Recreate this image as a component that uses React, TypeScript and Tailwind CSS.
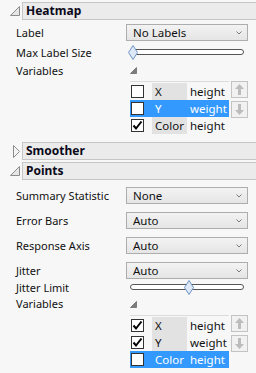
import React from "react";

const OpenTri = ({ size = 9, fill = "#e6e6e6", stroke = "#8c8c8c" }: { size?: number; fill?: string; stroke?: string }) => (
  <svg width={size + 1} height={size + 1} viewBox={`0 0 ${size + 1} ${size + 1}`}>
    <path d={`M${size + 0.5} 0.5 L${size + 0.5} ${size + 0.5} L0.5 ${size + 0.5} Z`} fill={fill} stroke={stroke} strokeWidth="1" />
  </svg>
);

const ClosedTri = () => (
  <svg width="7" height="13" viewBox="0 0 7 13">
    <path d="M0.5 0.5 L6.5 6.5 L0.5 12.5 Z" fill="#f4f4f4" stroke="#8c8c8c" strokeWidth="1" />
  </svg>
);

function Header({ title, open }: { title: string; open: boolean }) {
  return (
    <div className="flex items-center h-[18px]">
      <div className="w-[22px] h-full flex items-center justify-end pr-[2px]">
        {open ? <OpenTri /> : <ClosedTri />}
      </div>
      <div className="flex-1 h-full bg-[#ebebeb] border border-r-0 border-[#c6c6c6] flex items-center pl-[3px] font-bold text-[12px] text-[#0a0a1a]">
        {title}
      </div>
    </div>
  );
}

function Dropdown({ value }: { value: string }) {
  return (
    <div className="w-[122px] h-[17px] border border-[#adadad] bg-linear-to-b from-[#f3f3f3] to-[#e5e5e5] flex items-center justify-between pl-[6px] pr-[5px] text-[11.5px] text-[#111]">
      <span>{value}</span>
      <svg width="6" height="4" viewBox="0 0 6 4">
        <path d="M0.5 0.5 L3 3 L5.5 0.5" fill="none" stroke="#7a7a7a" strokeWidth="1" />
      </svg>
    </div>
  );
}

function Slider({ pos }: { pos: number }) {
  return (
    <div className="relative w-[120px] h-[16px] flex items-center">
      <div className="ml-[4px] w-[114px] h-[6px] rounded-full border border-[#555] bg-white" />
      <svg className="absolute top-[1px]" style={{ left: pos }} width="10" height="15" viewBox="0 0 10 15">
        <path d="M5 0.5 L9.5 7.5 L5 14.5 L0.5 7.5 Z" fill="#dde9f6" stroke="#6f93c2" strokeWidth="1" />
      </svg>
    </div>
  );
}

function Check({ checked }: { checked: boolean }) {
  return (
    <div className="w-[13px] h-[13px] border border-[#333] bg-white flex items-center justify-center">
      {checked && (
        <svg width="11" height="11" viewBox="0 0 11 11">
          <path d="M1.5 5.5 L4 8.5 L9.5 1.5" fill="none" stroke="#000" strokeWidth="2" />
        </svg>
      )}
    </div>
  );
}

function ArrowBtn({ dir }: { dir: "up" | "down" }) {
  return (
    <div className="w-[17px] h-[17px] border border-[#c3c3c3] bg-[#f1f1f1] flex items-center justify-center">
      <svg width="9" height="11" viewBox="0 0 9 11" style={{ transform: dir === "down" ? "rotate(180deg)" : undefined }}>
        <path d="M4.5 0 L9 5 L6 5 L6 11 L3 11 L3 5 L0 5 Z" fill="#bcbcbc" />
      </svg>
    </div>
  );
}

type Row = { role: string; v: string; checked: boolean; sel: boolean };

function VarTable({ rows }: { rows: Row[] }) {
  return (
    <div className="flex ml-[4px] text-[11.5px]">
      <div className="w-[99px] border-t border-[#dcdcdc] pt-[1px] relative">
        <div className="absolute left-[22px] top-[1px] bottom-0 w-[35px] bg-[#e2e2e2]" />
        {rows.map((r) => (
          <div
            key={r.role}
            className={`relative flex items-center h-[17px] ${r.sel ? "bg-[#3399ff] text-white" : "text-[#111]"}`}
          >
            <div className="w-[22px] pl-[1px]">
              <Check checked={r.checked} />
            </div>
            <div className="w-[35px] pl-[3px] whitespace-nowrap">{r.role}</div>
            <div className="pl-[3px]">{r.v}</div>
          </div>
        ))}
      </div>
      <div className="ml-[2px] flex flex-col gap-[3px]">
        <ArrowBtn dir="up" />
        <ArrowBtn dir="down" />
      </div>
    </div>
  );
}

function LRow({ label, h, children, cls = "" }: { label: string; h: string; children?: React.ReactNode; cls?: string }) {
  return (
    <div className={`flex items-center ${h} ${cls}`}>
      <div className="w-[126px] pl-[16px] text-[11px] text-[#111] whitespace-nowrap">{label}</div>
      <div className="flex items-center">{children}</div>
    </div>
  );
}

export default function App() {
  return (
    <div className="w-[256px] h-[373px] overflow-hidden bg-[#f7f7f7] pt-[2px] font-['Noto_Sans',sans-serif] leading-none">
      <Header title="Heatmap" open />
      <LRow label="Label" h="h-[17px]" cls="mt-[4px]">
        <Dropdown value="No Labels" />
      </LRow>
      <LRow label="Max Label Size" h="h-[20px]" cls="mt-[1px]">
        <Slider pos={2} />
      </LRow>
      <LRow label="Variables" h="h-[16px]">
        <div className="ml-[4px] mt-[1px]">
          <OpenTri size={6} fill="#7c7c7c" stroke="#7c7c7c" />
        </div>
      </LRow>
      <div className="mt-[3px] pl-[126px]">
        <VarTable
          rows={[
            { role: "X", v: "height", checked: false, sel: false },
            { role: "Y", v: "weight", checked: false, sel: true },
            { role: "Color", v: "height", checked: true, sel: false },
          ]}
        />
      </div>
      <div className="mt-[8px]">
        <Header title="Smoother" open={false} />
      </div>
      <div className="mt-[2px]">
        <Header title="Points" open />
      </div>
      <div className="mt-[7px] flex flex-col gap-[8px]">
        <LRow label="Summary Statistic" h="h-[17px]">
          <Dropdown value="None" />
        </LRow>
        <LRow label="Error Bars" h="h-[17px]">
          <Dropdown value="Auto" />
        </LRow>
        <LRow label="Response Axis" h="h-[17px]">
          <Dropdown value="Auto" />
        </LRow>
        <LRow label="Jitter" h="h-[17px]">
          <Dropdown value="Auto" />
        </LRow>
      </div>
      <LRow label="Jitter Limit" h="h-[16px]">
        <Slider pos={58} />
      </LRow>
      <LRow label="Variables" h="h-[17px]">
        <div className="ml-[4px] mt-[1px]">
          <OpenTri size={6} fill="#7c7c7c" stroke="#7c7c7c" />
        </div>
      </LRow>
      <div className="mt-[3px] pl-[126px]">
        <VarTable
          rows={[
            { role: "X", v: "height", checked: true, sel: false },
            { role: "Y", v: "weight", checked: true, sel: false },
            { role: "Color", v: "height", checked: false, sel: true },
          ]}
        />
      </div>
    </div>
  );
}
